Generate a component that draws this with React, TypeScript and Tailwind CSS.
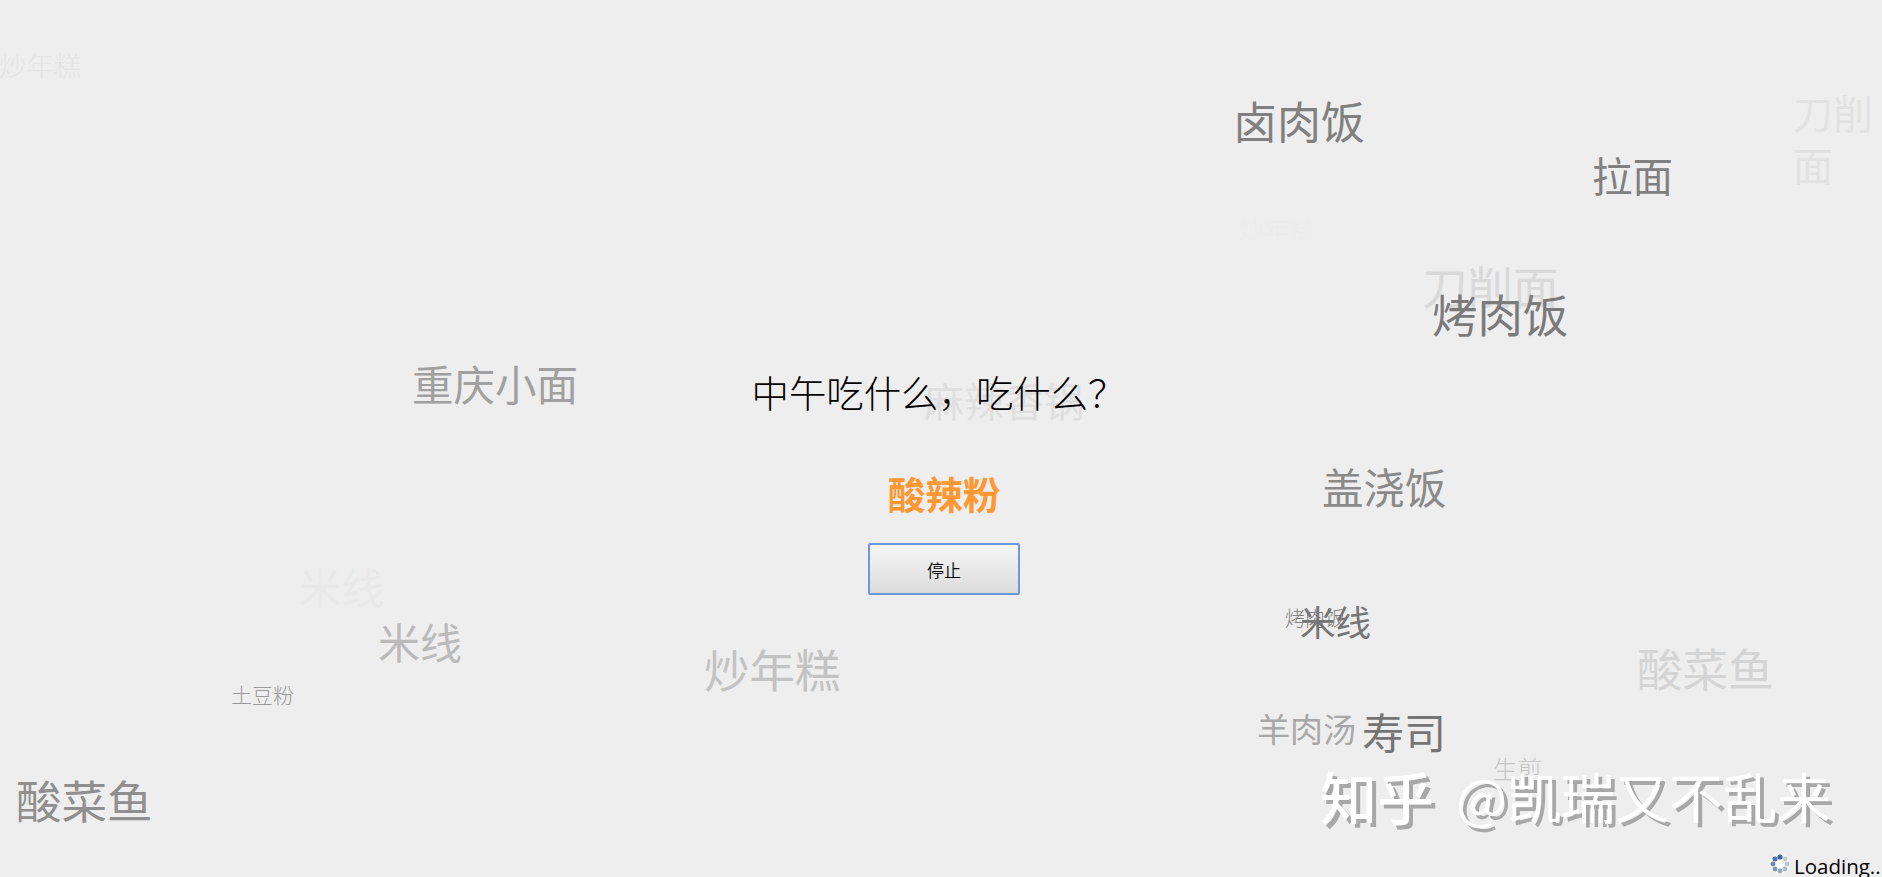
import React from 'react';

interface Dish {
  name: string;
  className: string;
}

const dishes: Dish[] = [
  { name: '炒年糕', className: 'left-[-1px] top-[51px] text-[27.5px] leading-none font-light text-[#e5e5e5]' },
  { name: '卤肉饭', className: 'left-[1233px] top-[98px] text-[44px] leading-none text-[#808080]' },
  { name: '拉面', className: 'left-[1592px] top-[155px] text-[40.5px] leading-none text-[#808080]' },
  { name: '刀削面', className: 'left-[1793px] top-[86px] w-[89px] text-[40px] leading-[52px] text-[#e2e2e2]' },
  { name: '炒年糕', className: 'left-[1239px] top-[216px] text-[25px] leading-none font-light text-[#ececec]' },
  { name: '刀削面', className: 'left-[1422px] top-[263px] text-[45.5px] leading-none text-[#d9d9d9]' },
  { name: '烤肉饭', className: 'left-[1432px] top-[291px] text-[45.5px] leading-none text-[#7a7a7a]' },
  { name: '重庆小面', className: 'left-[412px] top-[363px] text-[41.5px] leading-none text-[#a0a0a0]' },
  { name: '麻辣香锅', className: 'left-[924px] top-[380px] text-[40px] leading-none text-[#dfdfdf]' },
  { name: '盖浇饭', className: 'left-[1322px] top-[466px] text-[41.5px] leading-none text-[#8a8a8a]' },
  { name: '米线', className: 'left-[299px] top-[565px] text-[42.5px] leading-none text-[#e9e9e9]' },
  { name: '米线', className: 'left-[378px] top-[620px] text-[42px] leading-none text-[#bababa]' },
  { name: '土豆粉', className: 'left-[231px] top-[684px] text-[21px] leading-none font-light text-[#999999]' },
  { name: '炒年糕', className: 'left-[704px] top-[646px] text-[45.5px] leading-none text-[#c3c3c3]' },
  { name: '烤肉饭', className: 'left-[1285px] top-[608px] text-[20px] leading-none font-light text-[#808080]' },
  { name: '米线', className: 'left-[1300px] top-[603px] text-[35.5px] leading-none text-[#757575]' },
  { name: '酸菜鱼', className: 'left-[1637px] top-[645px] text-[45.5px] leading-none text-[#d4d4d4]' },
  { name: '羊肉汤', className: 'left-[1257px] top-[712px] text-[33px] leading-none text-[#a8a8a8]' },
  { name: '寿司', className: 'left-[1362px] top-[710px] text-[42px] leading-none text-[#757575]' },
  { name: '生煎', className: 'left-[1493px] top-[757px] text-[24.5px] leading-none font-light text-[#c6c6c6]' },
  { name: '酸菜鱼', className: 'left-[16px] top-[777px] text-[45.5px] leading-none text-[#8f8f8f]' },
];

const Spinner: React.FC = () => (
  <svg viewBox="0 0 20 20" className="h-5 w-5">
    <circle cx="10" cy="10" r="10" fill="#fafafa" />
    <circle cx="10" cy="3" r="2.6" fill="#3a64a8" />
    <circle cx="5" cy="5" r="2.5" fill="#4a70ae" />
    <circle cx="3" cy="10" r="2.4" fill="#6b87b8" />
    <circle cx="5" cy="15" r="2.4" fill="#8097bd" />
    <circle cx="10" cy="17" r="2.4" fill="#94a8c8" />
    <circle cx="15" cy="15" r="2.4" fill="#a9b7cd" />
    <circle cx="17" cy="10" r="2.4" fill="#bcc5d0" />
    <circle cx="15" cy="5" r="2.4" fill="#c4c8c8" />
  </svg>
);

export default function App() {
  return (
    <div className="relative h-[877px] w-full overflow-hidden bg-[#eeeeee] font-['Noto_Sans_CJK_SC',sans-serif]">
      {dishes.map((dish, i) => (
        <span key={i} className={`absolute ${dish.className}`}>
          {dish.name}
        </span>
      ))}

      <main className="relative flex flex-col items-center pt-[374px]">
        <h1 className="mr-[5px] text-[37.4px] leading-none font-light text-black">中午吃什么，吃什么？</h1>
        <p className="mt-[63px] ml-[6px] text-[37.6px] leading-none font-bold text-[#ff9833]">酸辣粉</p>
        <button
          type="button"
          className="mt-[31px] ml-[6px] h-[52px] w-[152px] rounded-[2px] border-2 border-[#6f98dc] bg-linear-to-b from-[#f6f6f6] to-[#dcdcdc] pt-px text-[17px] font-[350] text-black"
        >
          停止
        </button>
      </main>

      <div className="absolute top-[767px] left-[1320px] flex items-center leading-none whitespace-nowrap text-white [text-shadow:4px_4px_0_#a8a8a8]">
        <span className="text-[57px] font-medium">知乎</span>
        <span className="ml-[22px] text-[54px]">@凯瑞又不乱来</span>
      </div>

      <div className="absolute bottom-[3px] left-[1770px] flex h-5 items-center gap-1">
        <Spinner />
        <span className="pt-1 font-['Open_Sans',sans-serif] text-[20.5px] leading-5 text-black">Loading..</span>
      </div>
    </div>
  );
}
